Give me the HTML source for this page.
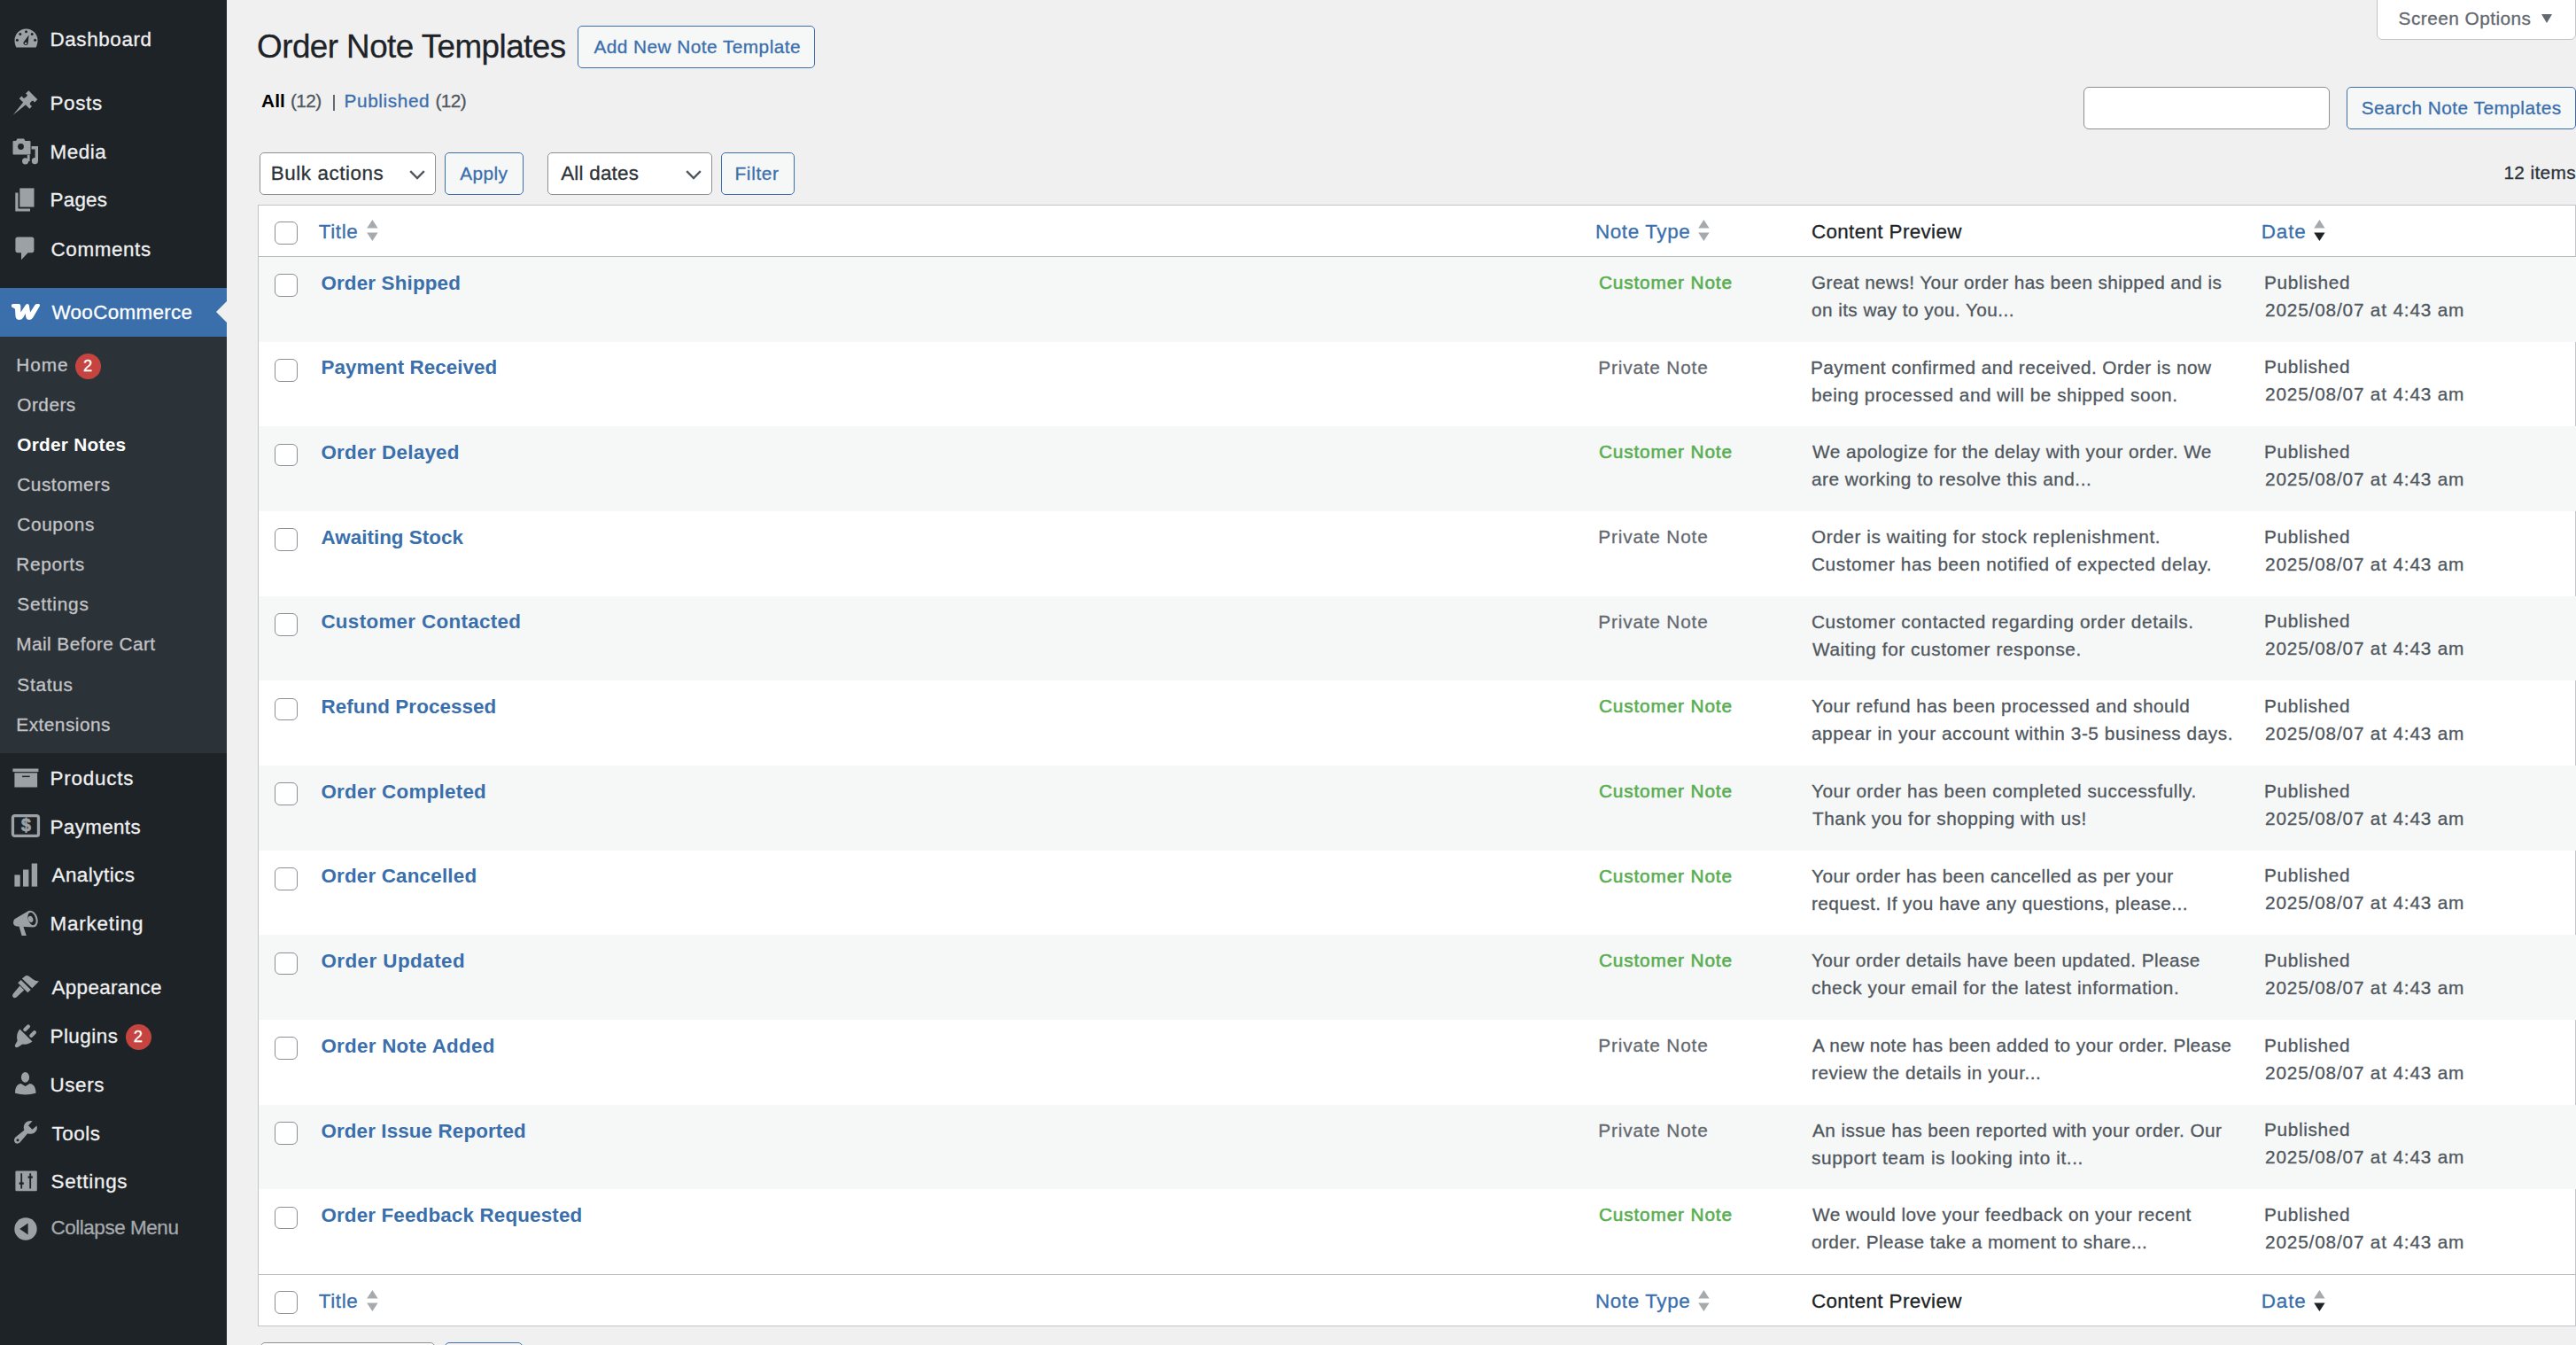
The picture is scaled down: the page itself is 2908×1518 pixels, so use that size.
<!DOCTYPE html>
<html><head><meta charset="utf-8"><title>Order Note Templates</title>
<style>
html,body{margin:0;padding:0;width:2908px;height:1518px;overflow:hidden;background:#f0f0f1}
body{position:relative;font-family:"Liberation Sans", sans-serif;white-space:pre}
</style></head><body>
<div style="position:absolute;left:0;top:0;width:256px;height:1518px;background:#1d2327"></div>
<div style="position:absolute;left:0;top:380px;width:256px;height:470px;background:#2c3338"></div>
<div style="position:absolute;left:0;top:325px;width:256px;height:55px;background:#3a6fac"></div>
<div style="position:absolute;left:244px;top:340px;width:0;height:0;border-top:12px solid transparent;border-bottom:12px solid transparent;border-right:12px solid #f0f0f1"></div>
<div style="position:absolute;left:85.0px;top:398.9px;width:29px;height:29px;border-radius:50%;background:#c5443f"></div>
<div style="position:absolute;left:142.0px;top:1156.0px;width:29px;height:29px;border-radius:50%;background:#c5443f"></div>
<svg style="position:absolute;left:15.5px;top:32px" width="27" height="22" viewBox="0 0 27 22"><path d="M13.5 0.5 A13 13 0 0 1 26.5 13.5 C26.5 16.5 25.8 19.2 24.6 21.5 L2.4 21.5 C1.2 19.2 0.5 16.5 0.5 13.5 A13 13 0 0 1 13.5 0.5Z" fill="#9ca1a6"/><circle cx="13.5" cy="3.8" r="1.5" fill="#1d2327"/><circle cx="6.8" cy="6.6" r="1.5" fill="#1d2327"/><circle cx="20.2" cy="6.6" r="1.5" fill="#1d2327"/><circle cx="3.4" cy="13.2" r="1.5" fill="#1d2327"/><circle cx="23.6" cy="13.2" r="1.5" fill="#1d2327"/><path d="M16.6 7.4 L15.6 17.2 A2.6 2.6 0 1 1 10.6 15.6 Z" fill="#1d2327"/><circle cx="13.1" cy="17" r="1.2" fill="#9ca1a6"/></svg>
<svg style="position:absolute;left:0px;top:90px" width="50" height="50" viewBox="0 0 50 50"><g transform="translate(37.3 17.2) rotate(45)"><path d="M-7.1 0 H7.1 V4.6 H4.4 C3.6 6.4 3.6 8.2 4.8 10.0 H8.2 V13.8 H2.0 L0 32 L-2.0 13.8 H-8.2 V10.0 H-4.8 C-3.6 8.2 -3.6 6.4 -4.4 4.6 H-7.1 Z" fill="#9ca1a6"/></g></svg>
<svg style="position:absolute;left:13.5px;top:155.5px" width="30" height="30" viewBox="0 0 30 30"><path d="M5.5 0.5 H13 L14.5 3 H19.5 A1 1 0 0 1 20.5 4 V17.5 A1 1 0 0 1 19.5 18.5 H1.5 A1 1 0 0 1 0.5 17.5 V4 A1 1 0 0 1 1.5 3 H4 Z" fill="#9ca1a6"/><circle cx="9.5" cy="9.5" r="3.4" fill="#1d2327"/><path d="M21.5 9 H29 V25.5 A3.6 3.6 0 1 1 25.6 22 L25.6 12.4 H21.5 Z" fill="#9ca1a6"/><path d="M14.6 25.8 A3.6 3.6 0 1 0 18.5 22.2 L18.5 17.4 L21.5 17.4 L21.5 14 Z" fill="none"/><circle cx="14.6" cy="25.8" r="3.6" fill="#9ca1a6"/><rect x="16.8" y="19" width="2.8" height="7" fill="#9ca1a6"/></svg>
<svg style="position:absolute;left:17px;top:211.5px" width="22" height="27" viewBox="0 0 22 27"><path d="M0.3 5.4 H3.5 V23.4 H17 V26.6 H0.3 Z" fill="#9ca1a6"/><rect x="5.3" y="0.4" width="16.2" height="21.2" fill="#9ca1a6"/></svg>
<svg style="position:absolute;left:17px;top:266.5px" width="22" height="27" viewBox="0 0 22 27"><path d="M3 0.5 H18.8 A2.6 2.6 0 0 1 21.4 3.1 V15.6 A2.6 2.6 0 0 1 18.8 18.2 H14.6 L7 26.2 V18.2 H3 A2.6 2.6 0 0 1 0.4 15.6 V3.1 A2.6 2.6 0 0 1 3 0.5Z" fill="#9ca1a6"/></svg>
<svg style="position:absolute;left:8px;top:336px" width="44" height="30" viewBox="0 0 44 30"><path d="M5.1 7.8 Q5.8 6.9 7.5 6.9 L13.2 6.9 Q15.2 7.0 15.3 9.0 L15.4 16.5 L20.8 8.2 Q21.8 6.9 23 6.9 Q24.6 7.0 24.8 8.6 L26.1 16.5 L31.4 8.2 Q32.3 6.9 34.2 6.9 L35.6 6.9 Q37.6 7.3 36.8 9.6 L29.2 22.6 Q27.8 24.9 25.2 24.9 Q22.0 24.9 21.3 22.0 L20.6 17.9 L18.4 22.3 Q17.0 24.9 13.9 24.9 Q10.0 24.9 9.5 21.0 L9.0 12.9 Q8.6 11.6 7.0 11.5 Q5.0 11.0 4.9 9.3 Q4.9 8.3 5.1 7.8 Z" fill="#ffffff"/></svg>
<svg style="position:absolute;left:13.5px;top:866.5px" width="30" height="22" viewBox="0 0 30 22"><rect x="0.4" y="0.5" width="29" height="3.6" fill="#9ca1a6"/><rect x="2.4" y="5.3" width="25.7" height="16.2" fill="#9ca1a6"/><rect x="11" y="8.6" width="8.7" height="1.5" fill="#1d2327"/></svg>
<svg style="position:absolute;left:12px;top:918px" width="34" height="28" viewBox="0 0 34 28"><rect x="2.45" y="2.55" width="29" height="22.9" rx="2.2" fill="none" stroke="#9ca1a6" stroke-width="3.3"/></svg>
<svg style="position:absolute;left:15.5px;top:973.5px" width="27" height="27" viewBox="0 0 27 27"><rect x="0.4" y="13.4" width="6.3" height="13.2" fill="#9ca1a6"/><rect x="10" y="7.5" width="6.4" height="19.1" fill="#9ca1a6"/><rect x="19.7" y="0.5" width="6.4" height="26.1" fill="#9ca1a6"/></svg>
<svg style="position:absolute;left:10px;top:910px" width="40" height="150" viewBox="0 0 40 150"><path d="M6.5 127.2 L22.6 117.8 L27.6 136.4 L9.0 135.4 Q5.2 135 5 131.4 Q5 128.4 6.5 127.2 Z" fill="#9ca1a6"/><path d="M11.4 135.0 L16.2 135.2 L19.8 145.9 L14.6 146.1 Z" fill="#9ca1a6"/><ellipse cx="26.2" cy="127" rx="6.1" ry="9.6" transform="rotate(-18 26.2 127)" fill="#9ca1a6"/><ellipse cx="26.0" cy="127" rx="4.2" ry="7.4" transform="rotate(-18 26.0 127)" fill="#1d2327"/><ellipse cx="24.6" cy="127.4" rx="2.7" ry="3.7" transform="rotate(-18 24.6 127.4)" fill="#9ca1a6"/></svg>
<svg style="position:absolute;left:10px;top:1095px" width="40" height="95" viewBox="0 0 40 95"><path d="M14.9 9.4 L18.5 6.4 Q20.8 5.4 23.3 7.2 Q27 10.2 29.9 11.7 L34.0 12.4 L26.3 20.3 Z" fill="#9ca1a6"/><path d="M13.7 11.1 L24.8 22.1 L21.3 25.2 L10.2 14.2 Z" fill="#9ca1a6"/><path d="M12.4 17.6 L17.2 22.4 L8.6 30.4 Q6.4 32 4.7 30.4 Q3.2 28.6 4.9 26.6 Z" fill="#9ca1a6"/><path d="M12.4 66.4 L26.5 80.6 Q22 84.4 15.4 83.6 L10.4 86.8 Q8.4 87.8 7.2 86.4 Q6.2 85.2 7.4 83.4 L9.6 79.8 Q7.6 71.6 12.4 66.4 Z" fill="#9ca1a6"/><path d="M18.3 67.0 L21.9 63.4 M25.2 73.9 L28.9 70.3" stroke="#9ca1a6" stroke-width="4.2" stroke-linecap="round"/></svg>
<svg style="position:absolute;left:12px;top:1204px" width="34" height="36" viewBox="0 0 34 36"><ellipse cx="16.5" cy="11.9" rx="4.6" ry="5.9" fill="#9ca1a6"/><path d="M5 29.8 Q4.8 22 9.5 19.6 Q10.6 19 11.6 18.9 L16.6 22.1 L21.6 18.9 Q22.8 19 23.8 19.6 Q28.6 22 28.5 29.8 Q16.7 33.4 5 29.8 Z" fill="#9ca1a6"/></svg>
<svg style="position:absolute;left:12px;top:1260px" width="34" height="34" viewBox="0 0 34 34"><path d="M24.6 5.2 L20.0 10.2 L24.5 14.8 L29.4 10.4 Q30.4 13.6 29.2 15.8 Q27.0 19.6 22.6 19.8 Q20.6 19.8 19.2 19.2 L10.4 29.6 Q8.6 31 6.8 30.6 Q4.4 30 4.0 27.4 Q3.8 25.2 5.4 23.6 L15.4 15.6 Q14.6 13.8 14.8 11.6 Q15.4 7.6 18.8 5.8 Q21.4 4.6 24.6 5.2 Z" fill="#9ca1a6"/><circle cx="8" cy="26.7" r="1.5" fill="#1d2327"/></svg>
<svg style="position:absolute;left:17px;top:1321px" width="25" height="24" viewBox="0 0 25 24"><rect x="0.4" y="0.6" width="24.4" height="22.6" rx="1.2" fill="#9ca1a6"/><path d="M7.2 3.2 V20.4 M17.2 3.2 V20.4" stroke="#1d2327" stroke-width="1.8"/><rect x="4.6" y="13.4" width="5.2" height="2.4" fill="#1d2327"/><rect x="14.6" y="6.4" width="5.2" height="2.4" fill="#1d2327"/></svg>
<svg style="position:absolute;left:15.5px;top:1374px" width="26" height="26" viewBox="0 0 26 26"><circle cx="13" cy="13" r="12.7" fill="#9ca1a6"/><path d="M6.2 13 L15.6 6.6 V19.4 Z" fill="#1d2327"/></svg>
<div style="position:absolute;left:256px;top:0;width:2652px;height:1518px;background:#f0f0f1"></div>
<div style="position:absolute;left:2682.6px;top:-8px;width:225.4px;height:52.8px;background:#fff;border:1.6px solid #c3c4c7;border-radius:0 0 6px 6px;box-sizing:border-box"></div>
<div style="position:absolute;left:2869px;top:15.5px;width:0;height:0;border-left:6px solid transparent;border-right:6px solid transparent;border-top:10px solid #646970"></div>
<div style="position:absolute;left:652.2px;top:29.1px;width:267.4px;height:47.5px;background:#f6f7f7;border:1.6px solid #3a6fac;border-radius:5px;box-sizing:border-box"></div>
<div style="position:absolute;left:376.1px;top:106.7px;width:1.8px;height:18px;background:#646970"></div>
<div style="position:absolute;left:2352.3px;top:98.3px;width:277.4px;height:47.3px;background:#fff;border:1.6px solid #8c8f94;border-radius:6px;box-sizing:border-box"></div>
<div style="position:absolute;left:2649.3px;top:98.3px;width:258.7px;height:47.3px;background:#f6f7f7;border:1.6px solid #3a6fac;border-radius:5px;box-sizing:border-box"></div>
<div style="position:absolute;left:293.2px;top:172.2px;width:198.4px;height:47.6px;background:#fff;border:1.6px solid #8c8f94;border-radius:5px;box-sizing:border-box"></div>
<svg style="position:absolute;left:460.6px;top:190.0px" width="20" height="14" viewBox="0 0 20 14"><path d="M2.2 3.2 L10 11.0 L17.8 3.2" fill="none" stroke="#50575e" stroke-width="2.4"/></svg>
<div style="position:absolute;left:502.0px;top:172.2px;width:88.8px;height:47.6px;background:#f6f7f7;border:1.6px solid #3a6fac;border-radius:5px;box-sizing:border-box"></div>
<div style="position:absolute;left:618.2px;top:172.2px;width:185.4px;height:47.6px;background:#fff;border:1.6px solid #8c8f94;border-radius:5px;box-sizing:border-box"></div>
<svg style="position:absolute;left:772.6px;top:190.0px" width="20" height="14" viewBox="0 0 20 14"><path d="M2.2 3.2 L10 11.0 L17.8 3.2" fill="none" stroke="#50575e" stroke-width="2.4"/></svg>
<div style="position:absolute;left:814.4px;top:172.2px;width:82.4px;height:47.6px;background:#f6f7f7;border:1.6px solid #3a6fac;border-radius:5px;box-sizing:border-box"></div>
<div style="position:absolute;left:293.7px;top:1515.2px;width:197.5px;height:47px;background:#fff;border:1.6px solid #8c8f94;border-radius:5px;box-sizing:border-box"></div>
<div style="position:absolute;left:502.4px;top:1515.2px;width:88px;height:47px;background:#f6f7f7;border:1.6px solid #3a6fac;border-radius:5px;box-sizing:border-box"></div>
<div style="position:absolute;left:290.5px;top:230.5px;width:2617.5px;height:1266.3px;background:#fff;border:1.6px solid #c3c4c7;box-sizing:border-box"></div>
<div style="position:absolute;left:292px;top:290.00px;width:2616px;height:95.67px;background:#f6f7f7"></div>
<div style="position:absolute;left:292px;top:481.34px;width:2616px;height:95.67px;background:#f6f7f7"></div>
<div style="position:absolute;left:292px;top:672.68px;width:2616px;height:95.67px;background:#f6f7f7"></div>
<div style="position:absolute;left:292px;top:864.02px;width:2616px;height:95.67px;background:#f6f7f7"></div>
<div style="position:absolute;left:292px;top:1055.36px;width:2616px;height:95.67px;background:#f6f7f7"></div>
<div style="position:absolute;left:292px;top:1246.70px;width:2616px;height:95.67px;background:#f6f7f7"></div>
<div style="position:absolute;left:292px;top:289px;width:2616px;height:1px;background:#b9bbbe"></div>
<div style="position:absolute;left:292px;top:1438px;width:2616px;height:1px;background:#b9bbbe"></div>
<div style="position:absolute;left:310px;top:250.2px;width:25.6px;height:25.6px;background:#fff;border:1.6px solid #8c8f94;border-radius:6px;box-sizing:border-box"></div>
<svg style="position:absolute;left:413.5px;top:248.4px" width="13" height="24" viewBox="0 0 13 24"><path d="M6.4 0 L12.6 9.5 H0.2 Z" fill="#a7aaad"/><path d="M6.4 24 L12.6 14.5 H0.2 Z" fill="#a7aaad"/></svg>
<svg style="position:absolute;left:1917.4px;top:248.4px" width="13" height="24" viewBox="0 0 13 24"><path d="M6.4 0 L12.6 9.5 H0.2 Z" fill="#a7aaad"/><path d="M6.4 24 L12.6 14.5 H0.2 Z" fill="#a7aaad"/></svg>
<svg style="position:absolute;left:2611.7px;top:248.4px" width="13" height="24" viewBox="0 0 13 24"><path d="M6.4 0 L12.6 9.5 H0.2 Z" fill="#a7aaad"/><path d="M6.4 24 L12.6 14.5 H0.2 Z" fill="#1d2327"/></svg>
<div style="position:absolute;left:310px;top:1457.2px;width:25.6px;height:25.6px;background:#fff;border:1.6px solid #8c8f94;border-radius:6px;box-sizing:border-box"></div>
<svg style="position:absolute;left:413.5px;top:1455.6px" width="13" height="24" viewBox="0 0 13 24"><path d="M6.4 0 L12.6 9.5 H0.2 Z" fill="#a7aaad"/><path d="M6.4 24 L12.6 14.5 H0.2 Z" fill="#a7aaad"/></svg>
<svg style="position:absolute;left:1917.4px;top:1455.6px" width="13" height="24" viewBox="0 0 13 24"><path d="M6.4 0 L12.6 9.5 H0.2 Z" fill="#a7aaad"/><path d="M6.4 24 L12.6 14.5 H0.2 Z" fill="#a7aaad"/></svg>
<svg style="position:absolute;left:2611.7px;top:1455.6px" width="13" height="24" viewBox="0 0 13 24"><path d="M6.4 0 L12.6 9.5 H0.2 Z" fill="#a7aaad"/><path d="M6.4 24 L12.6 14.5 H0.2 Z" fill="#1d2327"/></svg>
<div style="position:absolute;left:310px;top:309.3px;width:25.6px;height:25.6px;background:#fff;border:1.6px solid #8c8f94;border-radius:6px;box-sizing:border-box"></div>
<div style="position:absolute;left:310px;top:404.97px;width:25.6px;height:25.6px;background:#fff;border:1.6px solid #8c8f94;border-radius:6px;box-sizing:border-box"></div>
<div style="position:absolute;left:310px;top:500.64px;width:25.6px;height:25.6px;background:#fff;border:1.6px solid #8c8f94;border-radius:6px;box-sizing:border-box"></div>
<div style="position:absolute;left:310px;top:596.31px;width:25.6px;height:25.6px;background:#fff;border:1.6px solid #8c8f94;border-radius:6px;box-sizing:border-box"></div>
<div style="position:absolute;left:310px;top:691.98px;width:25.6px;height:25.6px;background:#fff;border:1.6px solid #8c8f94;border-radius:6px;box-sizing:border-box"></div>
<div style="position:absolute;left:310px;top:787.6500000000001px;width:25.6px;height:25.6px;background:#fff;border:1.6px solid #8c8f94;border-radius:6px;box-sizing:border-box"></div>
<div style="position:absolute;left:310px;top:883.3199999999999px;width:25.6px;height:25.6px;background:#fff;border:1.6px solid #8c8f94;border-radius:6px;box-sizing:border-box"></div>
<div style="position:absolute;left:310px;top:978.99px;width:25.6px;height:25.6px;background:#fff;border:1.6px solid #8c8f94;border-radius:6px;box-sizing:border-box"></div>
<div style="position:absolute;left:310px;top:1074.66px;width:25.6px;height:25.6px;background:#fff;border:1.6px solid #8c8f94;border-radius:6px;box-sizing:border-box"></div>
<div style="position:absolute;left:310px;top:1170.33px;width:25.6px;height:25.6px;background:#fff;border:1.6px solid #8c8f94;border-radius:6px;box-sizing:border-box"></div>
<div style="position:absolute;left:310px;top:1266.0px;width:25.6px;height:25.6px;background:#fff;border:1.6px solid #8c8f94;border-radius:6px;box-sizing:border-box"></div>
<div style="position:absolute;left:310px;top:1361.67px;width:25.6px;height:25.6px;background:#fff;border:1.6px solid #8c8f94;border-radius:6px;box-sizing:border-box"></div>
<div style="position:absolute;left:56.5px;top:34.40px;font-size:22.4px;line-height:22.4px;font-weight:400;color:#f0f0f1;letter-spacing:0.625px;-webkit-text-stroke-width:0.3px;">Dashboard</div>
<div style="position:absolute;left:56.5px;top:105.80px;font-size:22.4px;line-height:22.4px;font-weight:400;color:#f0f0f1;letter-spacing:0.675px;-webkit-text-stroke-width:0.3px;">Posts</div>
<div style="position:absolute;left:56.5px;top:160.50px;font-size:22.4px;line-height:22.4px;font-weight:400;color:#f0f0f1;letter-spacing:0.575px;-webkit-text-stroke-width:0.3px;">Media</div>
<div style="position:absolute;left:56.5px;top:215.10px;font-size:22.4px;line-height:22.4px;font-weight:400;color:#f0f0f1;letter-spacing:0.25px;-webkit-text-stroke-width:0.3px;">Pages</div>
<div style="position:absolute;left:57.5px;top:270.90px;font-size:22.4px;line-height:22.4px;font-weight:400;color:#f0f0f1;letter-spacing:0.629px;-webkit-text-stroke-width:0.3px;">Comments</div>
<div style="position:absolute;left:58.5px;top:342.30px;font-size:22.4px;line-height:22.4px;font-weight:400;color:#ffffff;letter-spacing:0.34px;-webkit-text-stroke-width:0.3px;">WooCommerce</div>
<div style="position:absolute;left:56.5px;top:868.40px;font-size:22.4px;line-height:22.4px;font-weight:400;color:#f0f0f1;letter-spacing:0.814px;-webkit-text-stroke-width:0.3px;">Products</div>
<div style="position:absolute;left:56.5px;top:923.00px;font-size:22.4px;line-height:22.4px;font-weight:400;color:#f0f0f1;letter-spacing:0.371px;-webkit-text-stroke-width:0.3px;">Payments</div>
<div style="position:absolute;left:58.5px;top:976.60px;font-size:22.4px;line-height:22.4px;font-weight:400;color:#f0f0f1;letter-spacing:0.488px;-webkit-text-stroke-width:0.3px;">Analytics</div>
<div style="position:absolute;left:56.5px;top:1031.70px;font-size:22.4px;line-height:22.4px;font-weight:400;color:#f0f0f1;letter-spacing:0.825px;-webkit-text-stroke-width:0.3px;">Marketing</div>
<div style="position:absolute;left:58.5px;top:1103.60px;font-size:22.4px;line-height:22.4px;font-weight:400;color:#f0f0f1;letter-spacing:0.356px;-webkit-text-stroke-width:0.3px;">Appearance</div>
<div style="position:absolute;left:56.5px;top:1158.70px;font-size:22.4px;line-height:22.4px;font-weight:400;color:#f0f0f1;letter-spacing:0.483px;-webkit-text-stroke-width:0.3px;">Plugins</div>
<div style="position:absolute;left:56.5px;top:1213.70px;font-size:22.4px;line-height:22.4px;font-weight:400;color:#f0f0f1;letter-spacing:0.625px;-webkit-text-stroke-width:0.3px;">Users</div>
<div style="position:absolute;left:58.5px;top:1268.80px;font-size:22.4px;line-height:22.4px;font-weight:400;color:#f0f0f1;letter-spacing:0.55px;-webkit-text-stroke-width:0.3px;">Tools</div>
<div style="position:absolute;left:57.5px;top:1322.50px;font-size:22.4px;line-height:22.4px;font-weight:400;color:#f0f0f1;letter-spacing:0.729px;-webkit-text-stroke-width:0.3px;">Settings</div>
<div style="position:absolute;left:57.4px;top:1374.70px;font-size:22.4px;line-height:22.4px;font-weight:400;color:#a7aaad;letter-spacing:-0.408px;-webkit-text-stroke-width:0.3px;">Collapse Menu</div>
<div style="position:absolute;left:18.3px;top:401.50px;font-size:20.8px;line-height:20.8px;font-weight:400;color:#c3c4c7;letter-spacing:0.9px;-webkit-text-stroke-width:0.3px;">Home</div>
<div style="position:absolute;left:19.3px;top:446.60px;font-size:20.8px;line-height:20.8px;font-weight:400;color:#c3c4c7;letter-spacing:0.48px;-webkit-text-stroke-width:0.3px;">Orders</div>
<div style="position:absolute;left:19.2px;top:491.70px;font-size:20.8px;line-height:20.8px;font-weight:700;color:#ffffff;letter-spacing:0.28px;">Order Notes</div>
<div style="position:absolute;left:19.3px;top:536.90px;font-size:20.8px;line-height:20.8px;font-weight:400;color:#c3c4c7;letter-spacing:0.525px;-webkit-text-stroke-width:0.3px;">Customers</div>
<div style="position:absolute;left:19.3px;top:582.00px;font-size:20.8px;line-height:20.8px;font-weight:400;color:#c3c4c7;letter-spacing:0.633px;-webkit-text-stroke-width:0.3px;">Coupons</div>
<div style="position:absolute;left:18.3px;top:627.10px;font-size:20.8px;line-height:20.8px;font-weight:400;color:#c3c4c7;letter-spacing:0.683px;-webkit-text-stroke-width:0.3px;">Reports</div>
<div style="position:absolute;left:19.3px;top:672.20px;font-size:20.8px;line-height:20.8px;font-weight:400;color:#c3c4c7;letter-spacing:0.771px;-webkit-text-stroke-width:0.3px;">Settings</div>
<div style="position:absolute;left:18.3px;top:717.30px;font-size:20.8px;line-height:20.8px;font-weight:400;color:#c3c4c7;letter-spacing:0.433px;-webkit-text-stroke-width:0.3px;">Mail Before Cart</div>
<div style="position:absolute;left:19.3px;top:762.50px;font-size:20.8px;line-height:20.8px;font-weight:400;color:#c3c4c7;letter-spacing:0.72px;-webkit-text-stroke-width:0.3px;">Status</div>
<div style="position:absolute;left:18.3px;top:807.60px;font-size:20.8px;line-height:20.8px;font-weight:400;color:#c3c4c7;letter-spacing:0.489px;-webkit-text-stroke-width:0.3px;">Extensions</div>
<div style="position:absolute;left:93.9px;top:404.10px;font-size:18.4px;line-height:18.4px;font-weight:400;color:#ffffff;letter-spacing:0px;-webkit-text-stroke-width:0.3px;">2</div>
<div style="position:absolute;left:150.8px;top:1161.10px;font-size:18.4px;line-height:18.4px;font-weight:400;color:#ffffff;letter-spacing:0px;-webkit-text-stroke-width:0.3px;">2</div>
<div style="position:absolute;left:24.0px;top:922.40px;font-size:19.5px;line-height:19.5px;font-weight:700;color:#9ca1a6;letter-spacing:0px;-webkit-text-stroke-width:0.8px;">$</div>
<div style="position:absolute;left:2707.6px;top:11.00px;font-size:20.8px;line-height:20.8px;font-weight:400;color:#646970;letter-spacing:0.462px;-webkit-text-stroke-width:0.3px;">Screen Options</div>
<div style="position:absolute;left:290.1px;top:35.20px;font-size:36.8px;line-height:36.8px;font-weight:400;color:#1d2327;letter-spacing:-0.542px;-webkit-text-stroke-width:0.3px;">Order Note Templates</div>
<div style="position:absolute;left:670.4px;top:42.80px;font-size:20.8px;line-height:20.8px;font-weight:400;color:#3a6fac;letter-spacing:0.465px;-webkit-text-stroke-width:0.3px;">Add New Note Template</div>
<div style="position:absolute;left:295.1px;top:103.80px;font-size:20.8px;line-height:20.8px;font-weight:700;color:#000000;letter-spacing:0.1px;">All</div>
<div style="position:absolute;left:327.9px;top:103.80px;font-size:20.8px;line-height:20.8px;font-weight:400;color:#50575e;letter-spacing:-0.567px;-webkit-text-stroke-width:0.3px;">(12)</div>
<div style="position:absolute;left:388.5px;top:103.80px;font-size:20.8px;line-height:20.8px;font-weight:400;color:#3a6fac;letter-spacing:0.6px;-webkit-text-stroke-width:0.3px;">Published</div>
<div style="position:absolute;left:491.4px;top:103.80px;font-size:20.8px;line-height:20.8px;font-weight:400;color:#50575e;letter-spacing:-0.567px;-webkit-text-stroke-width:0.3px;">(12)</div>
<div style="position:absolute;left:2665.7px;top:112.30px;font-size:20.8px;line-height:20.8px;font-weight:400;color:#3a6fac;letter-spacing:0.485px;-webkit-text-stroke-width:0.3px;">Search Note Templates</div>
<div style="position:absolute;left:305.8px;top:185.20px;font-size:22.4px;line-height:22.4px;font-weight:400;color:#2c3338;letter-spacing:0.564px;-webkit-text-stroke-width:0.3px;">Bulk actions</div>
<div style="position:absolute;left:519.2px;top:186.20px;font-size:20.8px;line-height:20.8px;font-weight:400;color:#3a6fac;letter-spacing:0.4px;-webkit-text-stroke-width:0.3px;">Apply</div>
<div style="position:absolute;left:633.2px;top:185.20px;font-size:22.4px;line-height:22.4px;font-weight:400;color:#2c3338;letter-spacing:0.237px;-webkit-text-stroke-width:0.3px;">All dates</div>
<div style="position:absolute;left:829.5px;top:186.20px;font-size:20.8px;line-height:20.8px;font-weight:400;color:#3a6fac;letter-spacing:0.66px;-webkit-text-stroke-width:0.3px;">Filter</div>
<div style="position:absolute;left:2826.4px;top:184.80px;font-size:20.8px;line-height:20.8px;font-weight:400;color:#2c3338;letter-spacing:0.371px;-webkit-text-stroke-width:0.3px;">12 items</div>
<div style="position:absolute;left:359.8px;top:250.80px;font-size:22.4px;line-height:22.4px;font-weight:400;color:#3a6fac;letter-spacing:0.625px;-webkit-text-stroke-width:0.3px;">Title</div>
<div style="position:absolute;left:1800.9px;top:250.80px;font-size:22.4px;line-height:22.4px;font-weight:400;color:#3a6fac;letter-spacing:0.65px;-webkit-text-stroke-width:0.3px;">Note Type</div>
<div style="position:absolute;left:2044.9px;top:250.80px;font-size:22.4px;line-height:22.4px;font-weight:400;color:#1d2327;letter-spacing:0.379px;-webkit-text-stroke-width:0.3px;">Content Preview</div>
<div style="position:absolute;left:2552.8px;top:250.80px;font-size:22.4px;line-height:22.4px;font-weight:400;color:#3a6fac;letter-spacing:0.867px;-webkit-text-stroke-width:0.3px;">Date</div>
<div style="position:absolute;left:359.8px;top:1457.90px;font-size:22.4px;line-height:22.4px;font-weight:400;color:#3a6fac;letter-spacing:0.625px;-webkit-text-stroke-width:0.3px;">Title</div>
<div style="position:absolute;left:1800.9px;top:1457.90px;font-size:22.4px;line-height:22.4px;font-weight:400;color:#3a6fac;letter-spacing:0.65px;-webkit-text-stroke-width:0.3px;">Note Type</div>
<div style="position:absolute;left:2044.9px;top:1457.90px;font-size:22.4px;line-height:22.4px;font-weight:400;color:#1d2327;letter-spacing:0.379px;-webkit-text-stroke-width:0.3px;">Content Preview</div>
<div style="position:absolute;left:2552.8px;top:1457.90px;font-size:22.4px;line-height:22.4px;font-weight:400;color:#3a6fac;letter-spacing:0.867px;-webkit-text-stroke-width:0.3px;">Date</div>
<div style="position:absolute;left:362.4px;top:308.80px;font-size:22.4px;line-height:22.4px;font-weight:700;color:#3a6fac;letter-spacing:0.167px;">Order Shipped</div>
<div style="position:absolute;left:1804.9px;top:309.00px;font-size:20.8px;line-height:20.8px;font-weight:400;color:#5aae52;letter-spacing:0.858px;-webkit-text-stroke-width:0.3px;-webkit-text-stroke:0.6px #5aae52;">Customer Note</div>
<div style="position:absolute;left:2045.0px;top:308.90px;font-size:20.8px;line-height:20.8px;font-weight:400;color:#50575e;letter-spacing:0.393px;-webkit-text-stroke-width:0.3px;">Great news! Your order has been shipped and is</div>
<div style="position:absolute;left:2045.0px;top:340.00px;font-size:20.8px;line-height:20.8px;font-weight:400;color:#50575e;letter-spacing:0.413px;-webkit-text-stroke-width:0.3px;">on its way to you. You...</div>
<div style="position:absolute;left:2556.1px;top:308.70px;font-size:20.8px;line-height:20.8px;font-weight:400;color:#50575e;letter-spacing:0.637px;-webkit-text-stroke-width:0.3px;">Published</div>
<div style="position:absolute;left:2557.1px;top:339.60px;font-size:20.8px;line-height:20.8px;font-weight:400;color:#50575e;letter-spacing:0.81px;-webkit-text-stroke-width:0.3px;">2025/08/07 at 4:43 am</div>
<div style="position:absolute;left:362.4px;top:404.47px;font-size:22.4px;line-height:22.4px;font-weight:700;color:#3a6fac;letter-spacing:0.067px;">Payment Received</div>
<div style="position:absolute;left:1804.3px;top:404.67px;font-size:20.8px;line-height:20.8px;font-weight:400;color:#646970;letter-spacing:0.818px;-webkit-text-stroke-width:0.3px;">Private Note</div>
<div style="position:absolute;left:2044.0px;top:404.57px;font-size:20.8px;line-height:20.8px;font-weight:400;color:#50575e;letter-spacing:0.43px;-webkit-text-stroke-width:0.3px;">Payment confirmed and received. Order is now</div>
<div style="position:absolute;left:2045.0px;top:435.67px;font-size:20.8px;line-height:20.8px;font-weight:400;color:#50575e;letter-spacing:0.525px;-webkit-text-stroke-width:0.3px;">being processed and will be shipped soon.</div>
<div style="position:absolute;left:2556.1px;top:404.37px;font-size:20.8px;line-height:20.8px;font-weight:400;color:#50575e;letter-spacing:0.637px;-webkit-text-stroke-width:0.3px;">Published</div>
<div style="position:absolute;left:2557.1px;top:435.27px;font-size:20.8px;line-height:20.8px;font-weight:400;color:#50575e;letter-spacing:0.81px;-webkit-text-stroke-width:0.3px;">2025/08/07 at 4:43 am</div>
<div style="position:absolute;left:362.4px;top:500.14px;font-size:22.4px;line-height:22.4px;font-weight:700;color:#3a6fac;letter-spacing:0.25px;">Order Delayed</div>
<div style="position:absolute;left:1804.9px;top:500.34px;font-size:20.8px;line-height:20.8px;font-weight:400;color:#5aae52;letter-spacing:0.858px;-webkit-text-stroke-width:0.3px;-webkit-text-stroke:0.6px #5aae52;">Customer Note</div>
<div style="position:absolute;left:2046.0px;top:500.24px;font-size:20.8px;line-height:20.8px;font-weight:400;color:#50575e;letter-spacing:0.444px;-webkit-text-stroke-width:0.3px;">We apologize for the delay with your order. We</div>
<div style="position:absolute;left:2045.0px;top:531.34px;font-size:20.8px;line-height:20.8px;font-weight:400;color:#50575e;letter-spacing:0.494px;-webkit-text-stroke-width:0.3px;">are working to resolve this and...</div>
<div style="position:absolute;left:2556.1px;top:500.04px;font-size:20.8px;line-height:20.8px;font-weight:400;color:#50575e;letter-spacing:0.637px;-webkit-text-stroke-width:0.3px;">Published</div>
<div style="position:absolute;left:2557.1px;top:530.94px;font-size:20.8px;line-height:20.8px;font-weight:400;color:#50575e;letter-spacing:0.81px;-webkit-text-stroke-width:0.3px;">2025/08/07 at 4:43 am</div>
<div style="position:absolute;left:362.4px;top:595.81px;font-size:22.4px;line-height:22.4px;font-weight:700;color:#3a6fac;letter-spacing:0.038px;">Awaiting Stock</div>
<div style="position:absolute;left:1804.3px;top:596.01px;font-size:20.8px;line-height:20.8px;font-weight:400;color:#646970;letter-spacing:0.818px;-webkit-text-stroke-width:0.3px;">Private Note</div>
<div style="position:absolute;left:2045.0px;top:595.91px;font-size:20.8px;line-height:20.8px;font-weight:400;color:#50575e;letter-spacing:0.562px;-webkit-text-stroke-width:0.3px;">Order is waiting for stock replenishment.</div>
<div style="position:absolute;left:2045.0px;top:627.01px;font-size:20.8px;line-height:20.8px;font-weight:400;color:#50575e;letter-spacing:0.55px;-webkit-text-stroke-width:0.3px;">Customer has been notified of expected delay.</div>
<div style="position:absolute;left:2556.1px;top:595.71px;font-size:20.8px;line-height:20.8px;font-weight:400;color:#50575e;letter-spacing:0.637px;-webkit-text-stroke-width:0.3px;">Published</div>
<div style="position:absolute;left:2557.1px;top:626.61px;font-size:20.8px;line-height:20.8px;font-weight:400;color:#50575e;letter-spacing:0.81px;-webkit-text-stroke-width:0.3px;">2025/08/07 at 4:43 am</div>
<div style="position:absolute;left:362.4px;top:691.48px;font-size:22.4px;line-height:22.4px;font-weight:700;color:#3a6fac;letter-spacing:0.312px;">Customer Contacted</div>
<div style="position:absolute;left:1804.3px;top:691.68px;font-size:20.8px;line-height:20.8px;font-weight:400;color:#646970;letter-spacing:0.818px;-webkit-text-stroke-width:0.3px;">Private Note</div>
<div style="position:absolute;left:2045.0px;top:691.58px;font-size:20.8px;line-height:20.8px;font-weight:400;color:#50575e;letter-spacing:0.6px;-webkit-text-stroke-width:0.3px;">Customer contacted regarding order details.</div>
<div style="position:absolute;left:2046.0px;top:722.68px;font-size:20.8px;line-height:20.8px;font-weight:400;color:#50575e;letter-spacing:0.559px;-webkit-text-stroke-width:0.3px;">Waiting for customer response.</div>
<div style="position:absolute;left:2556.1px;top:691.38px;font-size:20.8px;line-height:20.8px;font-weight:400;color:#50575e;letter-spacing:0.637px;-webkit-text-stroke-width:0.3px;">Published</div>
<div style="position:absolute;left:2557.1px;top:722.28px;font-size:20.8px;line-height:20.8px;font-weight:400;color:#50575e;letter-spacing:0.81px;-webkit-text-stroke-width:0.3px;">2025/08/07 at 4:43 am</div>
<div style="position:absolute;left:362.4px;top:787.15px;font-size:22.4px;line-height:22.4px;font-weight:700;color:#3a6fac;letter-spacing:0.087px;">Refund Processed</div>
<div style="position:absolute;left:1804.9px;top:787.35px;font-size:20.8px;line-height:20.8px;font-weight:400;color:#5aae52;letter-spacing:0.858px;-webkit-text-stroke-width:0.3px;-webkit-text-stroke:0.6px #5aae52;">Customer Note</div>
<div style="position:absolute;left:2045.0px;top:787.25px;font-size:20.8px;line-height:20.8px;font-weight:400;color:#50575e;letter-spacing:0.485px;-webkit-text-stroke-width:0.3px;">Your refund has been processed and should</div>
<div style="position:absolute;left:2045.0px;top:818.35px;font-size:20.8px;line-height:20.8px;font-weight:400;color:#50575e;letter-spacing:0.549px;-webkit-text-stroke-width:0.3px;">appear in your account within 3-5 business days.</div>
<div style="position:absolute;left:2556.1px;top:787.05px;font-size:20.8px;line-height:20.8px;font-weight:400;color:#50575e;letter-spacing:0.637px;-webkit-text-stroke-width:0.3px;">Published</div>
<div style="position:absolute;left:2557.1px;top:817.95px;font-size:20.8px;line-height:20.8px;font-weight:400;color:#50575e;letter-spacing:0.81px;-webkit-text-stroke-width:0.3px;">2025/08/07 at 4:43 am</div>
<div style="position:absolute;left:362.4px;top:882.82px;font-size:22.4px;line-height:22.4px;font-weight:700;color:#3a6fac;letter-spacing:0.25px;">Order Completed</div>
<div style="position:absolute;left:1804.9px;top:883.02px;font-size:20.8px;line-height:20.8px;font-weight:400;color:#5aae52;letter-spacing:0.858px;-webkit-text-stroke-width:0.3px;-webkit-text-stroke:0.6px #5aae52;">Customer Note</div>
<div style="position:absolute;left:2045.0px;top:882.92px;font-size:20.8px;line-height:20.8px;font-weight:400;color:#50575e;letter-spacing:0.54px;-webkit-text-stroke-width:0.3px;">Your order has been completed successfully.</div>
<div style="position:absolute;left:2046.0px;top:914.02px;font-size:20.8px;line-height:20.8px;font-weight:400;color:#50575e;letter-spacing:0.52px;-webkit-text-stroke-width:0.3px;">Thank you for shopping with us!</div>
<div style="position:absolute;left:2556.1px;top:882.72px;font-size:20.8px;line-height:20.8px;font-weight:400;color:#50575e;letter-spacing:0.637px;-webkit-text-stroke-width:0.3px;">Published</div>
<div style="position:absolute;left:2557.1px;top:913.62px;font-size:20.8px;line-height:20.8px;font-weight:400;color:#50575e;letter-spacing:0.81px;-webkit-text-stroke-width:0.3px;">2025/08/07 at 4:43 am</div>
<div style="position:absolute;left:362.4px;top:978.49px;font-size:22.4px;line-height:22.4px;font-weight:700;color:#3a6fac;letter-spacing:0.193px;">Order Cancelled</div>
<div style="position:absolute;left:1804.9px;top:978.69px;font-size:20.8px;line-height:20.8px;font-weight:400;color:#5aae52;letter-spacing:0.858px;-webkit-text-stroke-width:0.3px;-webkit-text-stroke:0.6px #5aae52;">Customer Note</div>
<div style="position:absolute;left:2045.0px;top:978.59px;font-size:20.8px;line-height:20.8px;font-weight:400;color:#50575e;letter-spacing:0.425px;-webkit-text-stroke-width:0.3px;">Your order has been cancelled as per your</div>
<div style="position:absolute;left:2045.0px;top:1009.69px;font-size:20.8px;line-height:20.8px;font-weight:400;color:#50575e;letter-spacing:0.398px;-webkit-text-stroke-width:0.3px;">request. If you have any questions, please...</div>
<div style="position:absolute;left:2556.1px;top:978.39px;font-size:20.8px;line-height:20.8px;font-weight:400;color:#50575e;letter-spacing:0.637px;-webkit-text-stroke-width:0.3px;">Published</div>
<div style="position:absolute;left:2557.1px;top:1009.29px;font-size:20.8px;line-height:20.8px;font-weight:400;color:#50575e;letter-spacing:0.81px;-webkit-text-stroke-width:0.3px;">2025/08/07 at 4:43 am</div>
<div style="position:absolute;left:362.4px;top:1074.16px;font-size:22.4px;line-height:22.4px;font-weight:700;color:#3a6fac;letter-spacing:0.458px;">Order Updated</div>
<div style="position:absolute;left:1804.9px;top:1074.36px;font-size:20.8px;line-height:20.8px;font-weight:400;color:#5aae52;letter-spacing:0.858px;-webkit-text-stroke-width:0.3px;-webkit-text-stroke:0.6px #5aae52;">Customer Note</div>
<div style="position:absolute;left:2045.0px;top:1074.26px;font-size:20.8px;line-height:20.8px;font-weight:400;color:#50575e;letter-spacing:0.395px;-webkit-text-stroke-width:0.3px;">Your order details have been updated. Please</div>
<div style="position:absolute;left:2045.0px;top:1105.36px;font-size:20.8px;line-height:20.8px;font-weight:400;color:#50575e;letter-spacing:0.558px;-webkit-text-stroke-width:0.3px;">check your email for the latest information.</div>
<div style="position:absolute;left:2556.1px;top:1074.06px;font-size:20.8px;line-height:20.8px;font-weight:400;color:#50575e;letter-spacing:0.637px;-webkit-text-stroke-width:0.3px;">Published</div>
<div style="position:absolute;left:2557.1px;top:1104.96px;font-size:20.8px;line-height:20.8px;font-weight:400;color:#50575e;letter-spacing:0.81px;-webkit-text-stroke-width:0.3px;">2025/08/07 at 4:43 am</div>
<div style="position:absolute;left:362.4px;top:1169.83px;font-size:22.4px;line-height:22.4px;font-weight:700;color:#3a6fac;letter-spacing:0.267px;">Order Note Added</div>
<div style="position:absolute;left:1804.3px;top:1170.03px;font-size:20.8px;line-height:20.8px;font-weight:400;color:#646970;letter-spacing:0.818px;-webkit-text-stroke-width:0.3px;">Private Note</div>
<div style="position:absolute;left:2046.0px;top:1169.93px;font-size:20.8px;line-height:20.8px;font-weight:400;color:#50575e;letter-spacing:0.376px;-webkit-text-stroke-width:0.3px;">A new note has been added to your order. Please</div>
<div style="position:absolute;left:2045.0px;top:1201.03px;font-size:20.8px;line-height:20.8px;font-weight:400;color:#50575e;letter-spacing:0.489px;-webkit-text-stroke-width:0.3px;">review the details in your...</div>
<div style="position:absolute;left:2556.1px;top:1169.73px;font-size:20.8px;line-height:20.8px;font-weight:400;color:#50575e;letter-spacing:0.637px;-webkit-text-stroke-width:0.3px;">Published</div>
<div style="position:absolute;left:2557.1px;top:1200.63px;font-size:20.8px;line-height:20.8px;font-weight:400;color:#50575e;letter-spacing:0.81px;-webkit-text-stroke-width:0.3px;">2025/08/07 at 4:43 am</div>
<div style="position:absolute;left:362.4px;top:1265.50px;font-size:22.4px;line-height:22.4px;font-weight:700;color:#3a6fac;letter-spacing:0.121px;">Order Issue Reported</div>
<div style="position:absolute;left:1804.3px;top:1265.70px;font-size:20.8px;line-height:20.8px;font-weight:400;color:#646970;letter-spacing:0.818px;-webkit-text-stroke-width:0.3px;">Private Note</div>
<div style="position:absolute;left:2046.0px;top:1265.60px;font-size:20.8px;line-height:20.8px;font-weight:400;color:#50575e;letter-spacing:0.417px;-webkit-text-stroke-width:0.3px;">An issue has been reported with your order. Our</div>
<div style="position:absolute;left:2045.0px;top:1296.70px;font-size:20.8px;line-height:20.8px;font-weight:400;color:#50575e;letter-spacing:0.594px;-webkit-text-stroke-width:0.3px;">support team is looking into it...</div>
<div style="position:absolute;left:2556.1px;top:1265.40px;font-size:20.8px;line-height:20.8px;font-weight:400;color:#50575e;letter-spacing:0.637px;-webkit-text-stroke-width:0.3px;">Published</div>
<div style="position:absolute;left:2557.1px;top:1296.30px;font-size:20.8px;line-height:20.8px;font-weight:400;color:#50575e;letter-spacing:0.81px;-webkit-text-stroke-width:0.3px;">2025/08/07 at 4:43 am</div>
<div style="position:absolute;left:362.4px;top:1361.17px;font-size:22.4px;line-height:22.4px;font-weight:700;color:#3a6fac;letter-spacing:0.157px;">Order Feedback Requested</div>
<div style="position:absolute;left:1804.9px;top:1361.37px;font-size:20.8px;line-height:20.8px;font-weight:400;color:#5aae52;letter-spacing:0.858px;-webkit-text-stroke-width:0.3px;-webkit-text-stroke:0.6px #5aae52;">Customer Note</div>
<div style="position:absolute;left:2046.0px;top:1361.27px;font-size:20.8px;line-height:20.8px;font-weight:400;color:#50575e;letter-spacing:0.422px;-webkit-text-stroke-width:0.3px;">We would love your feedback on your recent</div>
<div style="position:absolute;left:2045.0px;top:1392.37px;font-size:20.8px;line-height:20.8px;font-weight:400;color:#50575e;letter-spacing:0.387px;-webkit-text-stroke-width:0.3px;">order. Please take a moment to share...</div>
<div style="position:absolute;left:2556.1px;top:1361.07px;font-size:20.8px;line-height:20.8px;font-weight:400;color:#50575e;letter-spacing:0.637px;-webkit-text-stroke-width:0.3px;">Published</div>
<div style="position:absolute;left:2557.1px;top:1391.97px;font-size:20.8px;line-height:20.8px;font-weight:400;color:#50575e;letter-spacing:0.81px;-webkit-text-stroke-width:0.3px;">2025/08/07 at 4:43 am</div>
</body></html>
